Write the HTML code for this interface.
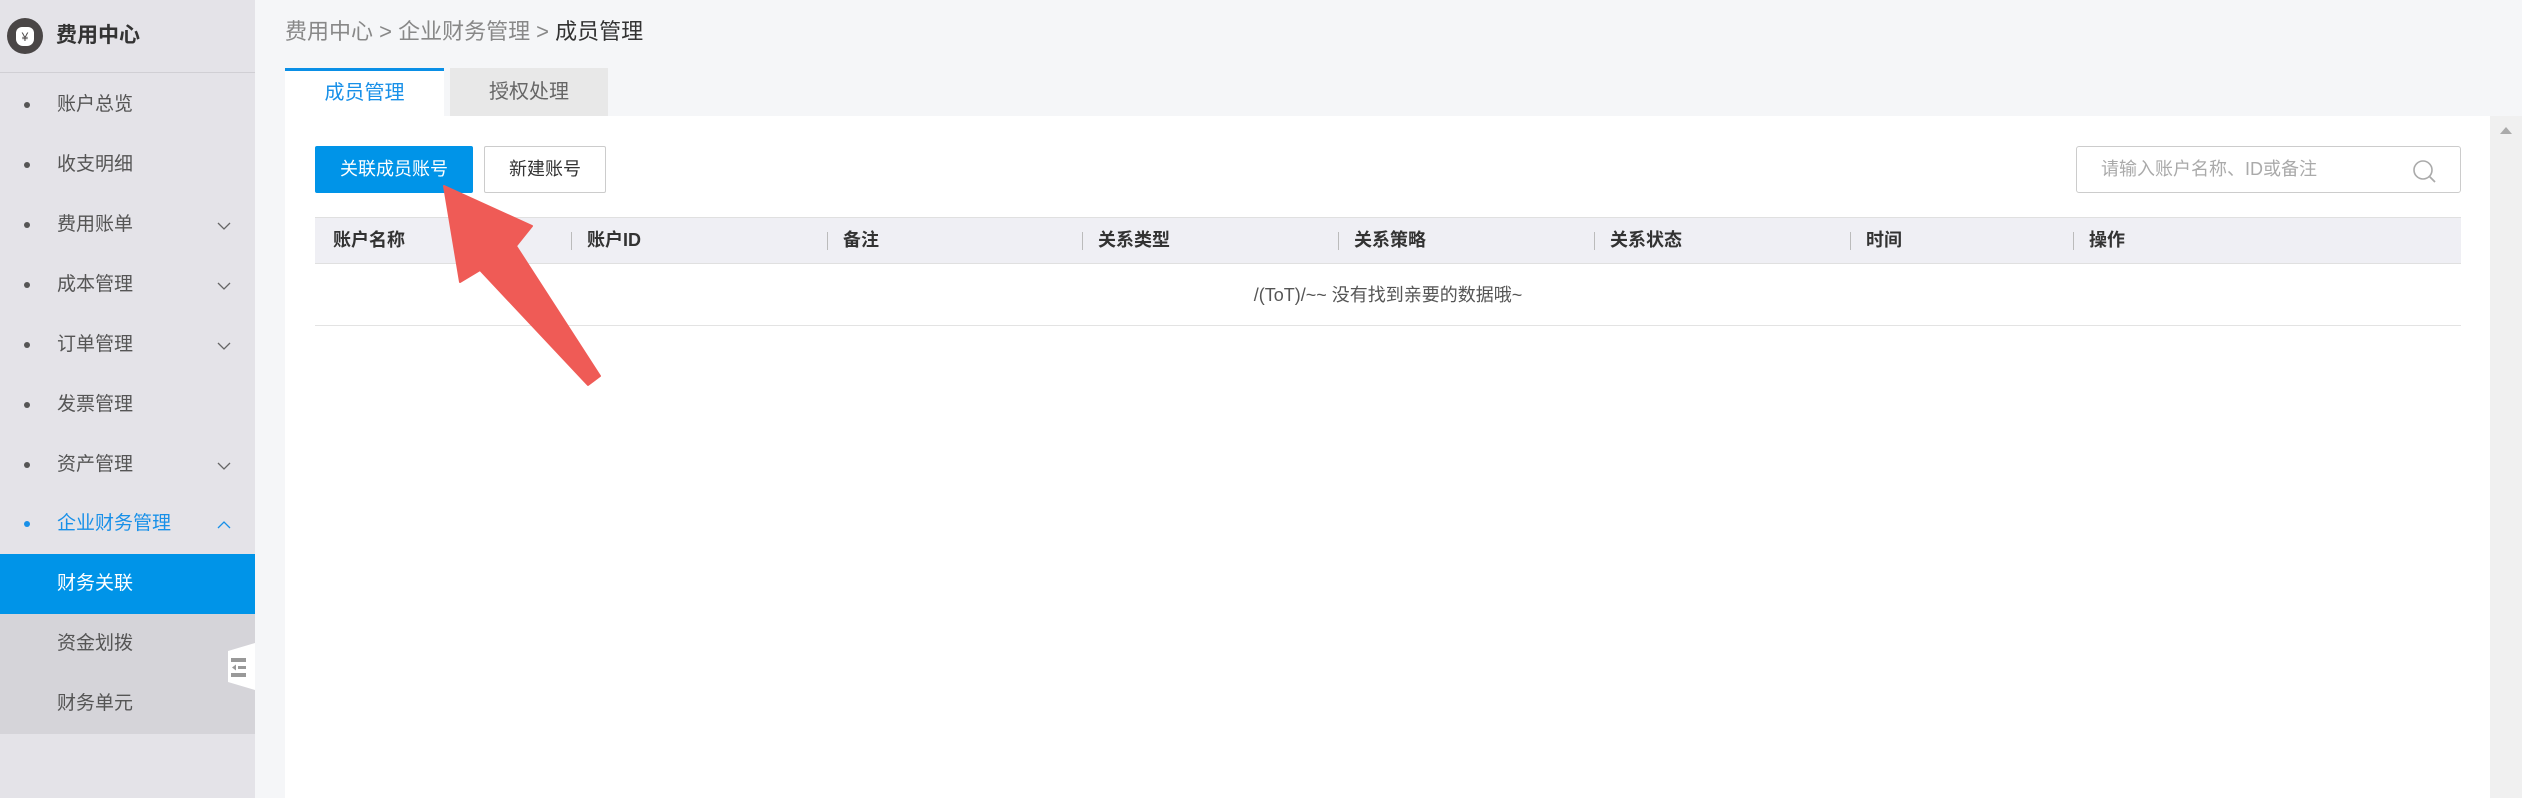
<!DOCTYPE html>
<html><head><meta charset="utf-8"><style>
*{margin:0;padding:0;box-sizing:border-box}
body{width:2522px;height:798px;overflow:hidden;background:#f5f6f8;font-family:"Liberation Sans","Noto Sans CJK SC",sans-serif;position:relative;color:#333}
.side{position:absolute;left:0;top:0;width:255px;height:798px;background:#e4e3e8}
.logo{position:absolute;left:7px;top:18px;width:36px;height:36px;border-radius:50%;background:#4a4646}
.logo i{position:absolute;left:9px;top:9px;width:18px;height:19px;border-radius:6px 6px 7px 7px;background:#fff;font-style:normal;font-size:12px;color:#4a4646;text-align:center;line-height:21px}
.title{position:absolute;left:56px;top:20px;font-size:21px;font-weight:bold;color:#333;line-height:32px}
.div{position:absolute;left:0;top:72px;width:255px;height:1px;background:#d0cfd4}
.mi{position:absolute;left:0;width:255px;height:60px;line-height:60px;font-size:19px;color:#555}
.mi span{position:absolute;left:57px}
.mi b{position:absolute;left:24px;top:27px;width:6px;height:6px;border-radius:50%;background:#555}
.chev{position:absolute;left:217px;top:24px;width:14px;height:14px}
.sub{position:absolute;left:0;width:255px;height:60px;line-height:60px;font-size:19px;color:#555;background:#d5d4d9}
.sub span{position:absolute;left:57px}
.bc{position:absolute;left:285px;top:17px;font-size:22px;color:#888;line-height:30px}
.bc em{font-style:normal;color:#333}
.tab1{position:absolute;left:285px;top:68px;width:159px;height:48px;background:#fff;border-top:3px solid #0a8fe6;color:#1890e8;font-size:20px;text-align:center;line-height:44px}
.tab2{position:absolute;left:450px;top:68px;width:158px;height:48px;background:#e8e8e8;color:#666;font-size:20px;text-align:center;line-height:48px}
.panel{position:absolute;left:285px;top:116px;width:2205px;height:682px;background:#fff}
.scr{position:absolute;left:2490px;top:116px;width:32px;height:682px;background:#f0f0f0}
.btn1{position:absolute;left:315px;top:146px;width:158px;height:47px;background:#0094e8;color:#fff;font-size:18px;text-align:center;line-height:47px;border-radius:2px}
.btn2{position:absolute;left:484px;top:146px;width:122px;height:47px;border:1px solid #ccc;background:#fff;color:#333;font-size:18px;text-align:center;line-height:45px;border-radius:2px}
.search{position:absolute;left:2076px;top:146px;width:385px;height:47px;border:1px solid #ccc;border-radius:3px;background:#fff}
.search span{position:absolute;left:24px;top:0;line-height:45px;font-size:18px;color:#aaa}
.th{position:absolute;left:315px;top:217px;width:2146px;height:47px;background:#efeff4;border-top:1px solid #e0e0e0;border-bottom:1px solid #e0e0e0}
.th div{position:absolute;top:0;line-height:45px;font-size:18px;font-weight:bold;color:#333}
.th s{position:absolute;top:14px;width:1px;height:18px;background:#bbb}
.empty{position:absolute;left:315px;top:264px;width:2146px;height:62px;border-bottom:1px solid #e3e3e3;text-align:center;line-height:62px;font-size:18px;color:#555}
</style></head><body>
<div class="side">
<div class="logo"><i>¥</i></div>
<div class="title">费用中心</div>
<div class="div"></div>
<div class="mi" style="top:75px"><b></b><span>账户总览</span></div>
<div class="mi" style="top:135px"><b></b><span>收支明细</span></div>
<div class="mi" style="top:195px"><b></b><span>费用账单</span><svg class="chev" viewBox="0 0 14 14"><path d="M1 4 L7 10 L13 4" fill="none" stroke="#666" stroke-width="1.3"/></svg></div>
<div class="mi" style="top:255px"><b></b><span>成本管理</span><svg class="chev" viewBox="0 0 14 14"><path d="M1 4 L7 10 L13 4" fill="none" stroke="#666" stroke-width="1.3"/></svg></div>
<div class="mi" style="top:315px"><b></b><span>订单管理</span><svg class="chev" viewBox="0 0 14 14"><path d="M1 4 L7 10 L13 4" fill="none" stroke="#666" stroke-width="1.3"/></svg></div>
<div class="mi" style="top:375px"><b></b><span>发票管理</span></div>
<div class="mi" style="top:435px"><b></b><span>资产管理</span><svg class="chev" viewBox="0 0 14 14"><path d="M1 4 L7 10 L13 4" fill="none" stroke="#666" stroke-width="1.3"/></svg></div>
<div class="mi" style="top:494px;color:#1890e8"><b style="background:#1890e8"></b><span>企业财务管理</span><svg class="chev" viewBox="0 0 14 14"><path d="M1 10 L7 4 L13 10" fill="none" stroke="#1890e8" stroke-width="1.3"/></svg></div>
<div class="sub" style="top:554px;background:#0094e8;color:#fff"><span>财务关联</span></div>
<div class="sub" style="top:614px"><span>资金划拨</span></div>
<div class="sub" style="top:674px"><span>财务单元</span></div>
<svg style="position:absolute;left:228px;top:643px" width="27" height="47" viewBox="0 0 27 47"><path d="M27 0 L27 47 L0 39 L0 8 Z" fill="#fff"/><rect x="3" y="15" width="15" height="4" fill="#999"/><rect x="10" y="23" width="8" height="3" fill="#999"/><path d="M4 24.5 L8 21.5 L8 27.5Z" fill="#999"/><rect x="3" y="30" width="15" height="4" fill="#999"/></svg>
</div>
<div class="bc">费用中心 &gt; 企业财务管理 &gt; <em>成员管理</em></div>
<div class="tab1">成员管理</div>
<div class="tab2">授权处理</div>
<div class="panel"></div>
<div class="scr"><svg style="position:absolute;left:10px;top:10px" width="12" height="10"><path d="M0 8 L6 1 L12 8Z" fill="#aaa"/></svg></div>
<div class="btn1">关联成员账号</div>
<div class="btn2">新建账号</div>
<div class="search"><span>请输入账户名称、ID或备注</span><svg style="position:absolute;left:335px;top:12px" width="26" height="26" viewBox="0 0 26 26"><circle cx="11" cy="11" r="9" fill="none" stroke="#aaa" stroke-width="1.6"/><path d="M17.5 17.5 L23 23" stroke="#aaa" stroke-width="1.8"/></svg></div>
<div class="th">
<div style="left:18px">账户名称</div>
<s style="left:256px"></s><div style="left:272px">账户ID</div>
<s style="left:512px"></s><div style="left:528px">备注</div>
<s style="left:767px"></s><div style="left:783px">关系类型</div>
<s style="left:1023px"></s><div style="left:1039px">关系策略</div>
<s style="left:1279px"></s><div style="left:1295px">关系状态</div>
<s style="left:1535px"></s><div style="left:1551px">时间</div>
<s style="left:1758px"></s><div style="left:1774px">操作</div>
</div>
<div class="empty">/(ToT)/~~ 没有找到亲要的数据哦~</div>
<svg style="position:absolute;left:0;top:0" width="2522" height="798"><path d="M444 186 L532 226 L516 246 L600 376 L588 385 L480 270 L460 282 Z" fill="#ef5b56" stroke="#ef5b56" stroke-width="2" stroke-linejoin="round"/></svg>
</body></html>
